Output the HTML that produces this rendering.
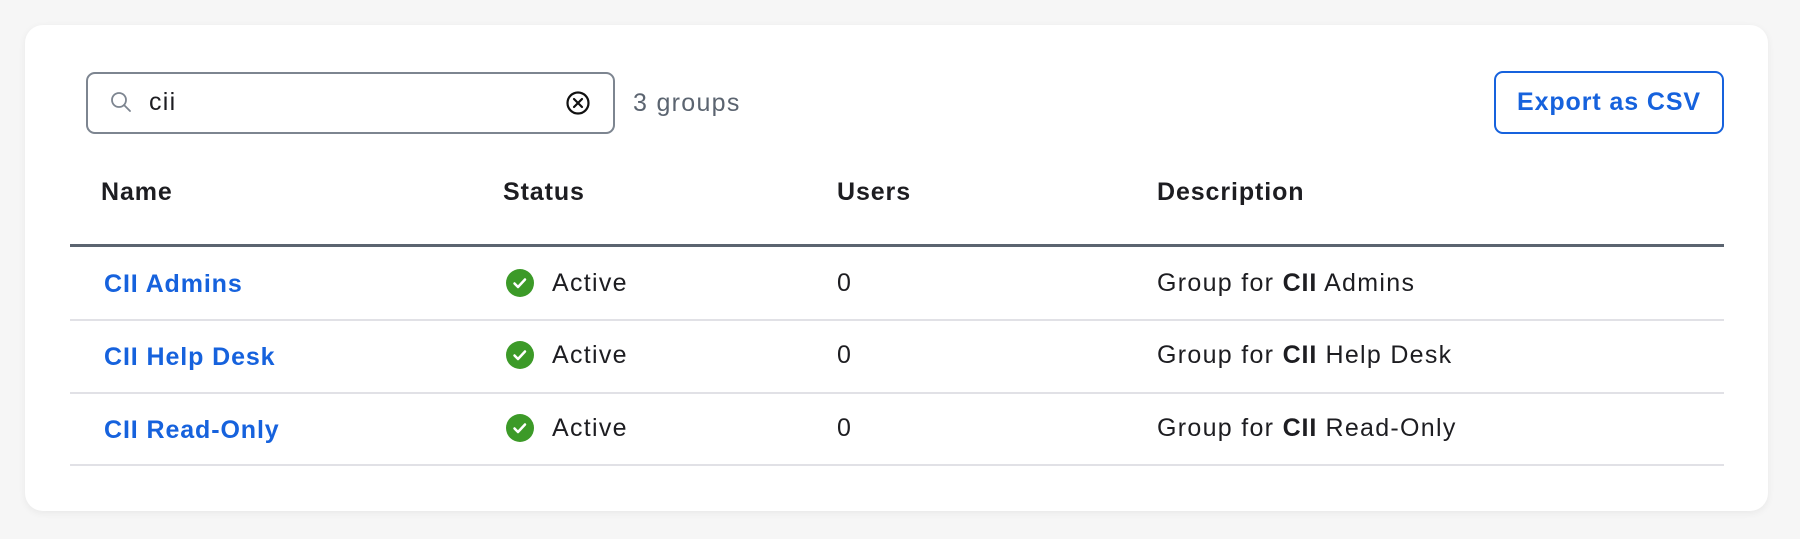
<!DOCTYPE html>
<html><head><meta charset="utf-8"><style>
*{box-sizing:border-box;margin:0;padding:0}
body{width:1800px;height:539px;background:#f6f6f6;font-family:"Liberation Sans",sans-serif;position:relative;overflow:hidden;color:#1d1d21}
.card{position:absolute;left:25px;top:25px;width:1743px;height:486px;background:#fff;border-radius:18px;box-shadow:0 2px 8px rgba(0,0,0,0.06)}
.abs{position:absolute}
.search{left:86px;top:72px;width:529px;height:62px;border:2.5px solid #7d8590;border-radius:9px}
.t{position:absolute;font-size:25px;line-height:28px;white-space:nowrap;letter-spacing:1.3px}
.t b{letter-spacing:0.9px}
.h{font-weight:bold;color:#1d1d21;letter-spacing:0.9px}
.n{font-weight:bold;color:#1662dd;letter-spacing:0.9px}
.line{position:absolute;left:70px;width:1654px;height:2px;background:#e1e1e6}
.btn{left:1494px;top:71px;width:230px;height:63px;border:2.5px solid #1662dd;border-radius:9px;color:#1662dd;font-weight:bold;font-size:25px;letter-spacing:0.9px;text-align:center;line-height:58px}
</style></head><body>
<div class="card"></div>
<div class="abs search"></div>
<svg class="abs" style="left:109px;top:90px" width="24" height="24" viewBox="0 0 24 24"><circle cx="10" cy="10" r="7" fill="none" stroke="#7d8590" stroke-width="1.8"/><line x1="15" y1="15" x2="21" y2="21" stroke="#7d8590" stroke-width="1.8" stroke-linecap="round"/></svg>
<div class="t" style="left:149px;top:88px;color:#1d1d21">cii</div>
<svg class="abs" style="left:565px;top:90px" width="26" height="26" viewBox="0 0 26 26"><circle cx="13" cy="13" r="10.5" fill="none" stroke="#111" stroke-width="2.2"/><path d="M9 9L17 17M17 9L9 17" stroke="#111" stroke-width="2.2" stroke-linecap="round"/></svg>
<div class="t" style="left:633px;top:89px;color:#5b6470">3 groups</div>
<div class="abs btn">Export as CSV</div>
<div class="t h" style="left:101px;top:178px">Name</div>
<div class="t h" style="left:503px;top:178px">Status</div>
<div class="t h" style="left:837px;top:178px">Users</div>
<div class="t h" style="left:1157px;top:178px">Description</div>
<div class="abs" style="left:70px;top:244px;width:1654px;height:3px;background:#5b6470"></div>

<div class="t n" style="left:104px;top:270px">CII Admins</div>
<div class="t n" style="left:104px;top:343px">CII Help Desk</div>
<div class="t n" style="left:104px;top:416px">CII Read-Only</div>

<svg class="abs" style="left:506px;top:269px" width="28" height="28" viewBox="0 0 28 28"><circle cx="14" cy="14" r="14" fill="#3c9a28"/><path d="M8.5 14.5l3.5 3.5 7-7.5" fill="none" stroke="#fff" stroke-width="2.5" stroke-linecap="round" stroke-linejoin="round"/></svg>
<svg class="abs" style="left:506px;top:341px" width="28" height="28" viewBox="0 0 28 28"><circle cx="14" cy="14" r="14" fill="#3c9a28"/><path d="M8.5 14.5l3.5 3.5 7-7.5" fill="none" stroke="#fff" stroke-width="2.5" stroke-linecap="round" stroke-linejoin="round"/></svg>
<svg class="abs" style="left:506px;top:414px" width="28" height="28" viewBox="0 0 28 28"><circle cx="14" cy="14" r="14" fill="#3c9a28"/><path d="M8.5 14.5l3.5 3.5 7-7.5" fill="none" stroke="#fff" stroke-width="2.5" stroke-linecap="round" stroke-linejoin="round"/></svg>
<div class="t" style="left:552px;top:269px">Active</div>
<div class="t" style="left:552px;top:341px">Active</div>
<div class="t" style="left:552px;top:414px">Active</div>
<div class="t" style="left:837px;top:269px">0</div>
<div class="t" style="left:837px;top:341px">0</div>
<div class="t" style="left:837px;top:414px">0</div>
<div class="t" style="left:1157px;top:269px">Group for <b>CII</b> Admins</div>
<div class="t" style="left:1157px;top:341px">Group for <b>CII</b> Help Desk</div>
<div class="t" style="left:1157px;top:414px">Group for <b>CII</b> Read-Only</div>
<div class="line" style="top:319px"></div>
<div class="line" style="top:392px"></div>
<div class="line" style="top:464px"></div>
</body></html>
